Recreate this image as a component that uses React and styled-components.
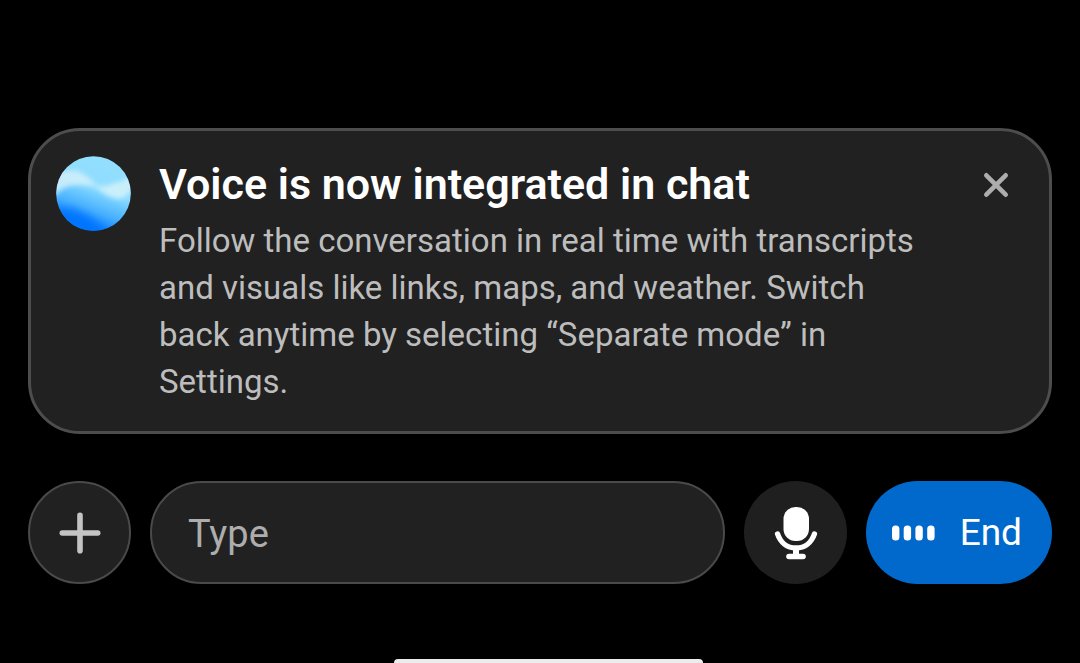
import React, { useState } from "react";
import styled, { createGlobalStyle } from "styled-components";

const GlobalStyle = createGlobalStyle`
  *, *::before, *::after { box-sizing: border-box; }
  body { margin: 0; background: #000; }
  body, button, input { font-family: Roboto, "Liberation Sans", sans-serif; }
`;

const Page = styled.main`
  display: flex;
  flex-direction: column;
  min-height: 100vh;
  padding: 128px 28px 0;
  background: #000;
`;

const Notice = styled.section`
  display: flex;
  align-items: flex-start;
  gap: 28px;
  padding: 25px 24px 26px 25px;
  border: 3px solid #4d4d4d;
  border-radius: 52px;
  background: #212121;
`;

const Orb = styled.svg`
  flex: none;
  width: 75px;
  height: 75px;
`;

const NoticeBody = styled.div`
  flex: 1;
  min-width: 0;
`;

const NoticeTitle = styled.h2`
  margin: 0 0 4px;
  color: #fff;
  font-size: 43px;
  font-weight: 600;
  line-height: 57px;
`;

const NoticeText = styled.p`
  max-width: 770px;
  margin: 0;
  color: #bdbdbd;
  font-size: 33px;
  line-height: 47px;
`;

const CloseButton = styled.button`
  display: grid;
  place-items: center;
  flex: none;
  width: 58px;
  height: 58px;
  padding: 0;
  border: 0;
  background: none;
  color: #adadad;
  cursor: pointer;
`;

const Composer = styled.form`
  display: flex;
  gap: 19px;
  margin-top: 47px;
`;

const RoundButton = styled.button`
  display: grid;
  place-items: center;
  flex: none;
  width: 103px;
  height: 103px;
  padding: 0;
  border: ${(p) => (p.$outlined ? "2px solid #4a4a4a" : "0")};
  border-radius: 50%;
  background: ${(p) => (p.$outlined ? "#212121" : "#1f1f1f")};
  color: ${(p) => (p.$outlined ? "#c4c4c4" : "#fff")};
  cursor: pointer;
`;

const MessageInput = styled.input`
  flex: 1;
  min-width: 0;
  height: 103px;
  padding: 2px 36px 0;
  border: 2px solid #4a4a4a;
  border-radius: 52px;
  outline: 0;
  background: #212121;
  color: #fff;
  font-size: 38px;
  &::placeholder { color: #adadad; opacity: 1; }
`;

const EndButton = styled.button`
  display: flex;
  align-items: center;
  justify-content: space-between;
  flex: none;
  width: 186px;
  height: 103px;
  padding: 0 30px 0 26px;
  border: 0;
  border-radius: 52px;
  background: #0169cc;
  color: #fff;
  font-size: 37px;
  cursor: pointer;
`;

const HomeIndicator = styled.div`
  align-self: center;
  width: 309px;
  height: 4px;
  margin: auto 0 0 17px;
  border-radius: 4px 4px 0 0;
  background: #ececec;
`;

const OrbIcon = () => (
  <Orb viewBox="0 0 75 75" aria-hidden="true">
    <defs>
      <clipPath id="orb-clip"><circle cx="37.5" cy="37.5" r="37.3" /></clipPath>
      <linearGradient id="orb-base" x1="0.68" y1="0" x2="0.32" y2="1">
        <stop offset="0" stopColor="#93dfff" />
        <stop offset="0.42" stopColor="#8edcff" />
        <stop offset="0.54" stopColor="#6cc9ff" />
        <stop offset="0.7" stopColor="#48b0ff" />
        <stop offset="0.86" stopColor="#1a8aff" />
        <stop offset="1" stopColor="#0078ff" />
      </linearGradient>
      <filter id="orb-soft" x="-40%" y="-60%" width="180%" height="220%">
        <feGaussianBlur stdDeviation="5" />
      </filter>
      <filter id="orb-mist" x="-40%" y="-60%" width="180%" height="220%">
        <feGaussianBlur stdDeviation="2.6" />
      </filter>
    </defs>
    <g clipPath="url(#orb-clip)">
      <rect width="75" height="75" fill="url(#orb-base)" />
      <path d="M-6 56 Q6 50 20 55 Q40 62 58 84 L-6 84Z" fill="#0074ff" filter="url(#orb-soft)" />
      <path d="M-6 22 Q8 12 22 15 Q32 19 42 31 Q28 28 18 29 Q6 30 -6 44Z" fill="#d3f0fa" opacity="0.85" filter="url(#orb-mist)" />
      <path d="M38 29 Q50 32 58 27 Q68 26 80 16 L80 28 Q72 42 62 43 Q50 41 38 29Z" fill="#cdf0fa" opacity="0.95" filter="url(#orb-mist)" />
    </g>
  </Orb>
);

const CloseIcon = () => (
  <svg width="26" height="26" viewBox="0 0 26 26" fill="none" stroke="currentColor" strokeWidth="4.6" strokeLinecap="round" aria-hidden="true">
    <path d="M3.3 3.3 22.7 22.7M22.7 3.3 3.3 22.7" />
  </svg>
);

const PlusIcon = () => (
  <svg width="42" height="42" viewBox="0 0 42 42" fill="none" stroke="currentColor" strokeWidth="5.6" strokeLinecap="round" aria-hidden="true">
    <path d="M21 3.3V38.7M3.3 21H38.7" />
  </svg>
);

const MicIcon = () => (
  <svg width="44" height="54" viewBox="0 0 44 54" fill="none" stroke="currentColor" strokeLinecap="round" aria-hidden="true">
    <rect x="9.5" y="1" width="25.5" height="34" rx="12" fill="currentColor" stroke="none" />
    <path d="M3.6 28C6.5 36.5 13 42 22 42S37.5 36.5 40.4 28" strokeWidth="5.4" />
    <path d="M22 42V50" strokeWidth="6" strokeLinecap="butt" />
    <path d="M15 50.5H29" strokeWidth="5.6" />
  </svg>
);

const LevelIcon = () => (
  <svg width="43" height="16" viewBox="0 0 43 16" fill="currentColor" aria-hidden="true">
    {[0, 11.7, 23.4, 35.2].map((x) => (
      <rect key={x} x={x} y="0.5" width="7.4" height="15" rx="3.5" />
    ))}
  </svg>
);

export default function App() {
  const [open, setOpen] = useState(true);
  return (
    <>
      <GlobalStyle />
      <Page>
        {open && (
          <Notice aria-labelledby="notice-title">
            <OrbIcon />
            <NoticeBody>
              <NoticeTitle id="notice-title">Voice is now integrated in chat</NoticeTitle>
              <NoticeText>
                Follow the conversation in real time with transcripts and visuals like links, maps, and weather.
                Switch back anytime by selecting “Separate mode” in Settings.
              </NoticeText>
            </NoticeBody>
            <CloseButton type="button" aria-label="Dismiss" onClick={() => setOpen(false)}>
              <CloseIcon />
            </CloseButton>
          </Notice>
        )}
        <Composer onSubmit={(e) => e.preventDefault()}>
          <RoundButton type="button" $outlined aria-label="Add attachment"><PlusIcon /></RoundButton>
          <MessageInput type="text" placeholder="Type" aria-label="Message" />
          <RoundButton type="button" aria-label="Microphone"><MicIcon /></RoundButton>
          <EndButton type="button"><LevelIcon />End</EndButton>
        </Composer>
        <HomeIndicator />
      </Page>
    </>
  );
}
